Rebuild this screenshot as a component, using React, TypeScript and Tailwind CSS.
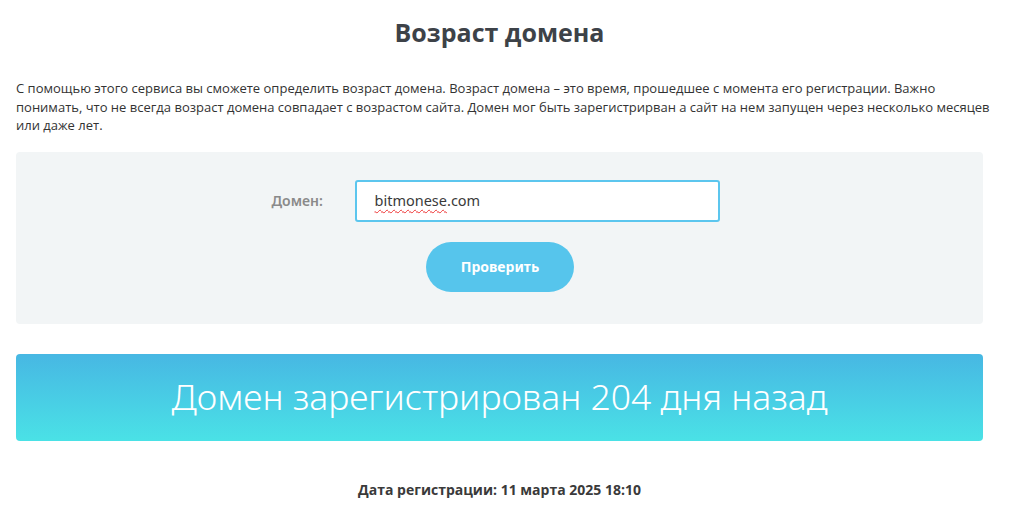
export default function App() {
  return (
    <div className="min-h-[513px] bg-white">
      <div className="w-[999px] px-4 pt-[17px] font-['Open_Sans',sans-serif]">
        <h1 className="text-center text-[25px] font-bold leading-[30px] text-[#3d4248]">
          Возраст домена
        </h1>

        <p className="mr-[-24px] mt-[32px] text-[13px] leading-[18.5px] text-[#333]">
          С помощью этого сервиса вы сможете определить возраст домена. Возраст домена – это время, прошедшее с момента его регистрации. Важно
          <br />
          понимать, что не всегда возраст домена совпадает с возрастом сайта. Домен мог быть зарегистрирван а сайт на нем запущен через несколько месяцев
          <br />
          или даже лет.
        </p>

        <div className="mt-[17px] flex h-[172px] flex-col items-center rounded bg-[#f2f5f6] pt-[28px] font-['Noto_Sans',sans-serif]">
          <div className="mr-[8px] flex items-center">
            <span className="w-[83px] text-[14px] font-semibold text-[#8a8a8a]">Домен:</span>
            <div className="flex h-[42px] w-[365px] items-center rounded-[3px] border-2 border-[#5cc6ee] bg-white pl-[18px] text-[14.5px] text-[#3a3a3a]">
              <span className="underline decoration-wavy decoration-[#e33] decoration-1 underline-offset-[3px]">bitmonese</span>
              <span>.com</span>
            </div>
          </div>
          <button className="ml-[1px] mt-[20px] h-[50px] w-[148px] rounded-full bg-[#56c5ec] text-[14px] font-bold text-white">
            Проверить
          </button>
        </div>

        <div className="mt-[30px] flex h-[87px] items-center justify-center rounded bg-gradient-to-b from-[#47b7e3] to-[#4ae2e6] font-['Noto_Sans',sans-serif] text-[35.5px] font-light text-white">
          Домен зарегистрирован 204 дня назад
        </div>

        <p className="mt-[38px] text-center text-[14px] font-bold text-[#3a3a3a]">
          Дата регистрации: 11 марта 2025 18:10
        </p>
      </div>
    </div>
  );
}
